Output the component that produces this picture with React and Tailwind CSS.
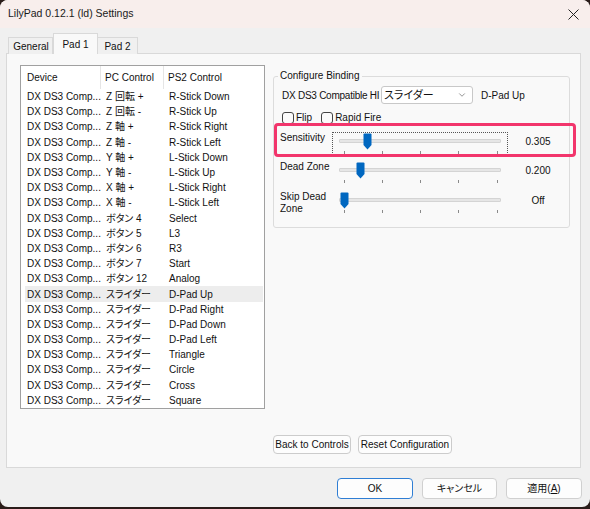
import { ChevronDown } from "lucide-react";

const rows = [
  ["Z 回転 +", "R-Stick Down"],
  ["Z 回転 -", "R-Stick Up"],
  ["Z 軸 +", "R-Stick Right"],
  ["Z 軸 -", "R-Stick Left"],
  ["Y 軸 +", "L-Stick Down"],
  ["Y 軸 -", "L-Stick Up"],
  ["X 軸 +", "L-Stick Right"],
  ["X 軸 -", "L-Stick Left"],
  ["ボタン 4", "Select"],
  ["ボタン 5", "L3"],
  ["ボタン 6", "R3"],
  ["ボタン 7", "Start"],
  ["ボタン 12", "Analog"],
  ["スライダー", "D-Pad Up"],
  ["スライダー", "D-Pad Right"],
  ["スライダー", "D-Pad Down"],
  ["スライダー", "D-Pad Left"],
  ["スライダー", "Triangle"],
  ["スライダー", "Circle"],
  ["スライダー", "Cross"],
  ["スライダー", "Square"],
];

const font = "[font-family:'Liberation_Sans','Noto_Sans_CJK_JP',sans-serif] [font-feature-settings:'palt']";

function Thumb() {
  return (
    <svg width="9" height="17" viewBox="0 0 9 17">
      <path d="M0.5 1.5 Q0.5 0.5 1.5 0.5 H7.5 Q8.5 0.5 8.5 1.5 V12 L4.5 16.5 L0.5 12 Z" fill="#0067c0" />
    </svg>
  );
}

function SliderRow({ label, value, thumb, focused, className = "" }) {
  return (
    <div className={`flex ${className}`}>
      <div className="w-[52px] leading-[12px]">{label}</div>
      <div
        className={`relative h-[23px] w-[176px] ${
          focused ? "border border-dotted border-[#555]" : "border border-transparent"
        }`}
      >
        <div className="absolute left-[6px] right-[6px] top-[6px] h-[4px] rounded-[1px] border border-[#d4d4d4] bg-[#e6e6e6]" />
        <div className="absolute top-0" style={{ left: thumb - 1 }}>
          <Thumb />
        </div>
        {[11, 49, 87, 125, 164].map((x) => (
          <div key={x} className="absolute top-[18px] h-[3px] w-px bg-[#8a8a8a]" style={{ left: x }} />
        ))}
      </div>
      <div className="w-[60px] pt-[4px] text-center leading-[12px]">{value}</div>
    </div>
  );
}

function Btn({ children, className = "" }) {
  return (
    <div
      className={`flex items-center justify-center rounded-[4px] border bg-[#fdfdfd] text-[10px] ${className}`}
    >
      {children}
    </div>
  );
}

export default function App() {
  return (
    <div className={`h-[509px] w-[590px] overflow-hidden bg-[#2a1c19] text-[10px] text-[#111] ${font}`}>
      <div className="flex h-[507px] flex-col overflow-hidden rounded-[8px] bg-[#f0f0f0]">
        {/* title bar */}
        <div className="flex h-[28px] items-center justify-between bg-[#f8eeec] pl-[8px] pr-[10px]">
          <span className="text-[10.5px] text-[#1a1a1a]">LilyPad 0.12.1 (ld) Settings</span>
          <svg width="11" height="11" viewBox="0 0 11 11" className="mr-[1px]">
            <path d="M0.5 0.5 L10.5 10.5 M10.5 0.5 L0.5 10.5" stroke="#222" strokeWidth="1" />
          </svg>
        </div>

        {/* tabs */}
        <div className="relative z-10 -mb-px ml-[8px] flex h-[26px] items-end">
          <div className="flex h-[17px] w-[45px] items-center justify-center border border-b-0 border-[#d9d9d9] bg-[#f0f0f0] pl-px pt-px">
            General
          </div>
          <div className="flex h-[21px] w-[45px] items-start justify-center border border-b-0 border-[#d9d9d9] bg-[#f9f9f9] pt-[3px]">
            Pad 1
          </div>
          <div className="flex h-[17px] w-[40px] items-center justify-center border border-b-0 border-l-0 border-[#d9d9d9] bg-[#f0f0f0] pt-px">
            Pad 2
          </div>
        </div>

        {/* tab panel */}
        <div className="ml-[6px] h-[415px] w-[575px] border border-[#d9d9d9] bg-[#f9f9f9]">
          <div className="flex h-full gap-[8px] pb-[13px] pl-[13px] pt-[11px]">
            {/* list view */}
            <div className="h-[344px] w-[245px] shrink-0 self-start border border-[#a0a0a0] bg-white">
              <div className="ml-[4px] flex h-[23px] items-center">
                <div className="flex h-full w-[76px] items-center border-r border-[#e5e5e5] pl-[2px]">Device</div>
                <div className="flex h-full w-[63px] items-center border-r border-[#e5e5e5] pl-[4px]">PC Control</div>
                <div className="pl-[4px]">PS2 Control</div>
              </div>
              {rows.map(([pc, ps2], i) => (
                <div
                  key={i}
                  className={`ml-[4px] mr-px flex h-[15.2px] items-center whitespace-nowrap ${
                    i === 13 ? "bg-[#ededed]" : ""
                  }`}
                >
                  <div className="w-[76px] overflow-hidden pl-[2px]">DX DS3 Comp...</div>
                  <div className="w-[63px] pl-[5px]">{pc}</div>
                  <div className="pl-[5px]">{ps2}</div>
                </div>
              ))}
            </div>

            {/* right column */}
            <div className="flex w-[297px] flex-col pt-[11px]">
              <div className="relative h-[152px] rounded-[3px] border border-[#dcdcdc]">
                <span className="absolute -top-[7px] left-[4px] bg-[#f9f9f9] px-[2px] leading-[12px]">
                  Configure Binding
                </span>

                <div className="flex items-center pl-[8px] pt-[9px]">
                  <div className="w-[99px] overflow-hidden whitespace-nowrap tracking-[-0.25px]">
                    DX DS3 Compatible HI
                  </div>
                  <div className="flex h-[18px] w-[92px] items-center justify-between rounded-[3px] border border-[#c8c8c8] bg-white pl-[2px] pr-[5px] text-[11px]">
                    <span>スライダー</span>
                    <ChevronDown size={10} strokeWidth={1.5} color="#555" />
                  </div>
                  <span className="ml-[8px]">D-Pad Up</span>
                </div>

                <div className="mt-[6px] flex items-center pl-[8px]">
                  <div className="h-[12px] w-[12px] rounded-[3px] border border-[#444] bg-[#fbfbfb]" />
                  <span className="ml-[2px]">Flip</span>
                  <div className="ml-[9px] h-[12px] w-[12px] rounded-[3px] border border-[#444] bg-[#fbfbfb]" />
                  <span className="ml-[2px]">Rapid Fire</span>
                </div>

                <div className="mt-[7px] pl-[6px]">
                  <SliderRow label="Sensitivity" value="0.305" thumb={31} focused />
                  <SliderRow label="Dead Zone" value="0.200" thumb={24} className="mt-[6px]" />
                  <SliderRow label={<>Skip Dead<br />Zone</>} value="Off" thumb={8} className="mt-[7px]" />
                </div>

                {/* highlight annotation */}
                <div className="absolute left-0 top-[46px] h-[34px] w-[302px] rounded-[4px] border-[3px] border-[#f2356c]" />
              </div>

              <div className="mt-auto flex gap-[7px]">
                <Btn className="h-[19px] w-[78px] border-[#cccccc]">Back to Controls</Btn>
                <Btn className="h-[19px] w-[94px] border-[#cccccc]">Reset Configuration</Btn>
              </div>
            </div>
          </div>
        </div>

        {/* dialog buttons */}
        <div className="flex justify-end gap-[9px] pr-[8px] pt-[10px]">
          <Btn className="h-[21px] w-[76px] border-[#2f7ed4]">OK</Btn>
          <Btn className="h-[21px] w-[75px] border-[#d0d0d0]">キャンセル</Btn>
          <Btn className="h-[21px] w-[76px] border-[#d0d0d0]">
            <span>
              適用(<span className="underline">A</span>)
            </span>
          </Btn>
        </div>
      </div>
    </div>
  );
}
